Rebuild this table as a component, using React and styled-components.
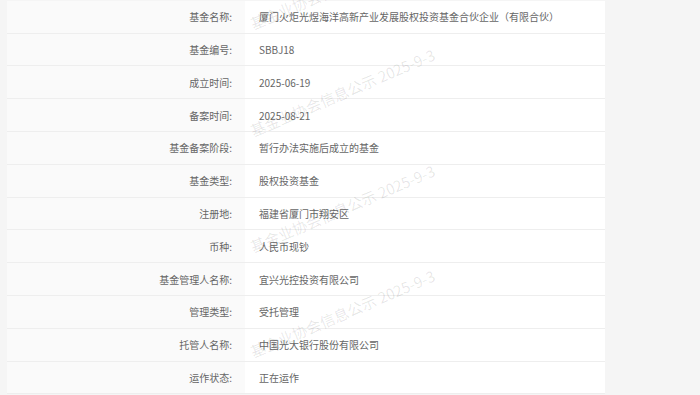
import React from 'react';
import styled, { createGlobalStyle } from 'styled-components';

const GlobalStyle = createGlobalStyle`
  html, body {
    margin: 0;
    padding: 0;
    background: #f5f5f5;
    font-family: "Noto Sans CJK SC", "Noto Sans", sans-serif;
  }
`;

const Page = styled.div`
  position: relative;
  width: 700px;
  height: 395px;
  overflow: hidden;
  padding: 0.8px 0 0 7px;
  box-sizing: border-box;
`;

const Table = styled.div`
  width: 598px;
  display: flex;
  flex-direction: column;
`;

const Row = styled.div`
  display: grid;
  grid-template-columns: 238px 1fr;
  height: 32.8px;
  box-sizing: border-box;
  border-bottom: 1px solid #eeeeee;
`;

const Label = styled.div`
  background: #fafafa;
  color: #666;
  font-size: 10px;
  display: flex;
  align-items: center;
  justify-content: flex-end;
  padding-right: 13px;
`;

const Value = styled.div`
  background: #ffffff;
  color: #666;
  font-size: 10px;
  display: flex;
  align-items: center;
  padding-left: 14px;
`;

const Watermark = styled.div`
  position: absolute;
  left: 254px;
  top: ${p => p.$top}px;
  font-size: 15px;
  color: rgba(0, 0, 0, 0.1);
  white-space: nowrap;
  transform-origin: left bottom;
  transform: rotate(-23deg);
  pointer-events: none;
  line-height: 1;
`;

const rows = [
  ['基金名称:', '厦门火炬光煜海洋高新产业发展股权投资基金合伙企业（有限合伙）'],
  ['基金编号:', 'SBBJ18'],
  ['成立时间:', '2025-06-19'],
  ['备案时间:', '2025-08-21'],
  ['基金备案阶段:', '暂行办法实施后成立的基金'],
  ['基金类型:', '股权投资基金'],
  ['注册地:', '福建省厦门市翔安区'],
  ['币种:', '人民币现钞'],
  ['基金管理人名称:', '宜兴光控投资有限公司'],
  ['管理类型:', '受托管理'],
  ['托管人名称:', '中国光大银行股份有限公司'],
  ['运作状态:', '正在运作'],
];

const marks = [16, 123, 239, 344];

export default function App() {
  return (
    <>
      <GlobalStyle />
      <Page>
        <Table>
          {rows.map(([k, v]) => (
            <Row key={k}>
              <Label>{k}</Label>
              <Value>{v}</Value>
            </Row>
          ))}
        </Table>
        {marks.map(t => (
          <Watermark key={t} $top={t}>基金业协会信息公示 2025-9-3</Watermark>
        ))}
      </Page>
    </>
  );
}
